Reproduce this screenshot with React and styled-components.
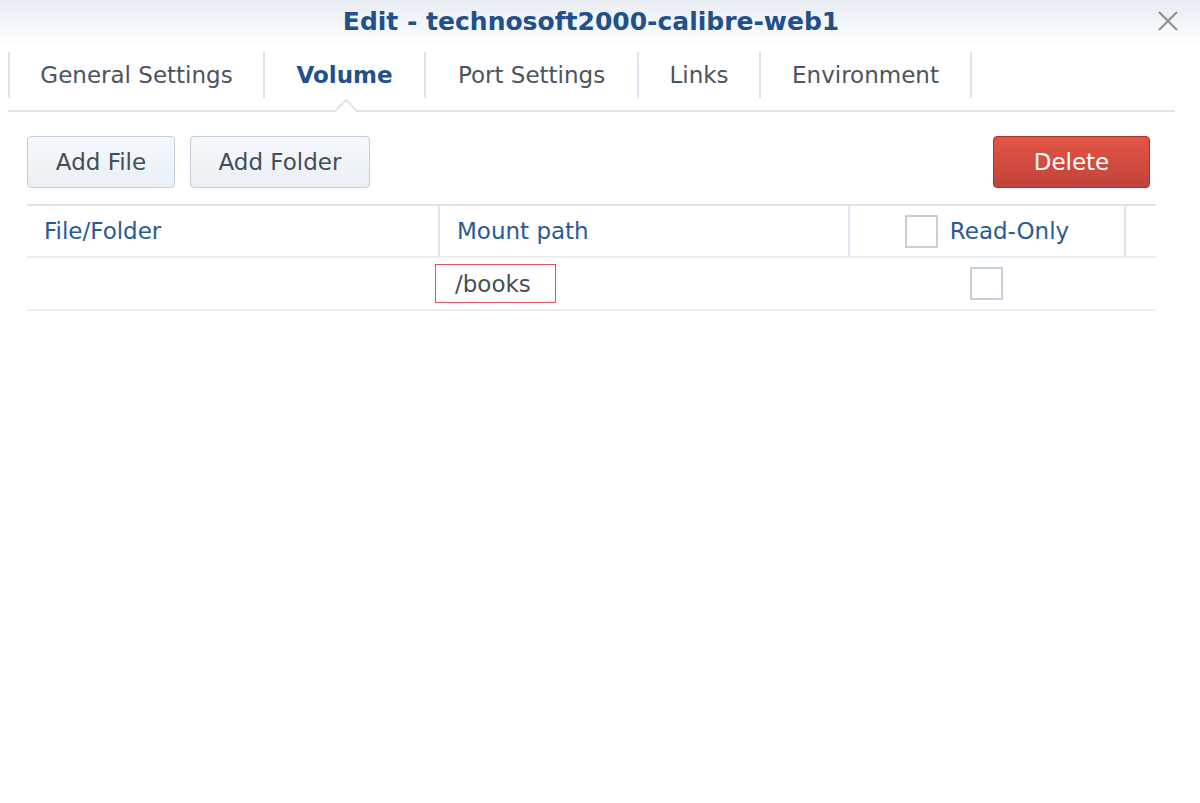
import React from 'react';
import styled, { createGlobalStyle } from 'styled-components';

const Global = createGlobalStyle`
  html, body {
    margin: 0;
    padding: 0;
    background: #fff;
  }
  body {
    font-family: "DejaVu Sans", Verdana, sans-serif;
  }
`;

const Window = styled.div`
  width: 1200px;
  height: 803px;
  background: #fff;
  position: relative;
  overflow: hidden;
`;

const TitleBar = styled.div`
  height: 42px;
  padding: 0 18px 2px 0;
  display: flex;
  align-items: center;
  justify-content: center;
  background: linear-gradient(#e8edf3, #fdfeff);
  position: relative;
`;

const Title = styled.h1`
  margin: 0;
  font-size: 25px;
  font-weight: bold;
  color: #22508a;
`;

const Close = styled.button`
  position: absolute;
  right: 20px;
  top: 9px;
  width: 24px;
  height: 24px;
  border: 0;
  padding: 0;
  background: transparent;
  display: flex;
  align-items: center;
  justify-content: center;
`;

const Tabs = styled.div`
  margin: 8px 25px 0 8px;
  height: 58px;
  display: flex;
  align-items: stretch;
  border-bottom: 2px solid #dfe2e6;
  position: relative;
`;

const Tab = styled.div`
  box-sizing: border-box;
  display: flex;
  align-items: center;
  justify-content: center;
  width: ${p => p.$w}px;
  border-left: 2px solid #dae4ee;
  margin-bottom: 12px;
  font-size: 23px;
  color: ${p => (p.$active ? '#22508a' : '#4b5460')};
  font-weight: ${p => (p.$active ? 'bold' : 'normal')};
  position: relative;
  &:last-child {
    width: ${p => p.$w + 2}px;
    border-right: 2px solid #dae4ee;
  }
`;

const Pointer = styled.span`
  position: absolute;
  left: 50%;
  bottom: -20px;
  width: 14px;
  height: 14px;
  margin-left: -7px;
  background: #fff;
  border-left: 2px solid #dfe2e6;
  border-top: 2px solid #dfe2e6;
  transform: rotate(45deg);
`;

const Body = styled.div`
  padding: 24px 50px 0 27px;
`;

const Toolbar = styled.div`
  display: flex;
  gap: 15px;
  align-items: center;
`;

const Button = styled.button`
  box-sizing: border-box;
  height: 52px;
  width: ${p => p.$w}px;
  padding: 0;
  font-family: inherit;
  font-size: 23px;
  border-radius: 4px;
  border: 1px solid ${p => (p.$danger ? '#a9322b' : '#c5cfda')};
  color: ${p => (p.$danger ? '#fff' : '#444e59')};
  background: ${p =>
    p.$danger
      ? 'linear-gradient(#e35545, #c2433a)'
      : 'linear-gradient(#f6f9fc, #e9eff5)'};
  ${p => p.$danger && 'margin-left: auto;'}
`;

const Table = styled.div`
  margin-top: 16px;
  width: 1129px;
`;

const Row = styled.div`
  display: grid;
  grid-template-columns: 411px 410px 276px 32px;
  height: ${p => (p.$head ? 50 : 51)}px;
  border-top: ${p => (p.$head ? '2px solid #dce5ee' : 'none')};
  border-bottom: 2px solid #e9eef3;
`;

const HeadCell = styled.div`
  display: flex;
  align-items: center;
  justify-content: ${p => (p.$center ? 'center' : 'flex-start')};
  gap: 12px;
  padding-left: ${p => (p.$center ? 0 : 17)}px;
  border-left: ${p => (p.$first ? 'none' : '2px solid #dce7f1')};
  font-size: 23px;
  color: #2a5a94;
`;

const Cell = styled.div`
  display: flex;
  align-items: center;
  justify-content: ${p => (p.$center ? 'center' : 'flex-start')};
  font-size: 23px;
  color: #444e59;
`;

const PathBox = styled.div`
  margin-left: -3px;
  width: 121px;
  height: 39px;
  box-sizing: border-box;
  border: 1px solid #dc5462;
  display: flex;
  align-items: center;
  padding-left: 19px;
`;

const Check = styled.span`
  display: inline-block;
  width: 33px;
  height: 33px;
  box-sizing: border-box;
  border: 2px solid #c6d0da;
  background: #fff;
`;

const tabs = [
  { label: 'General Settings', w: 255 },
  { label: 'Volume', w: 161, active: true },
  { label: 'Port Settings', w: 213 },
  { label: 'Links', w: 122 },
  { label: 'Environment', w: 211 },
];

export default function App() {
  return (
    <Window>
      <Global />
      <TitleBar>
        <Title>Edit - technosoft2000-calibre-web1</Title>
        <Close aria-label="close">
          <svg width="22" height="22" viewBox="0 0 22 22">
            <path d="M2 2 L20 20 M20 2 L2 20" stroke="#8e9296" strokeWidth="2.2" />
          </svg>
        </Close>
      </TitleBar>
      <Tabs>
        {tabs.map(t => (
          <Tab key={t.label} $w={t.w} $active={t.active}>
            {t.label}
            {t.active && <Pointer />}
          </Tab>
        ))}
      </Tabs>
      <Body>
        <Toolbar>
          <Button $w={148}>Add File</Button>
          <Button $w={180}>Add Folder</Button>
          <Button $w={157} $danger>Delete</Button>
        </Toolbar>
        <Table>
          <Row $head>
            <HeadCell $first>File/Folder</HeadCell>
            <HeadCell>Mount path</HeadCell>
            <HeadCell $center>
              <Check />
              Read-Only
            </HeadCell>
            <HeadCell />
          </Row>
          <Row>
            <Cell />
            <Cell>
              <PathBox>/books</PathBox>
            </Cell>
            <Cell $center>
              <Check />
            </Cell>
            <Cell />
          </Row>
        </Table>
      </Body>
    </Window>
  );
}
